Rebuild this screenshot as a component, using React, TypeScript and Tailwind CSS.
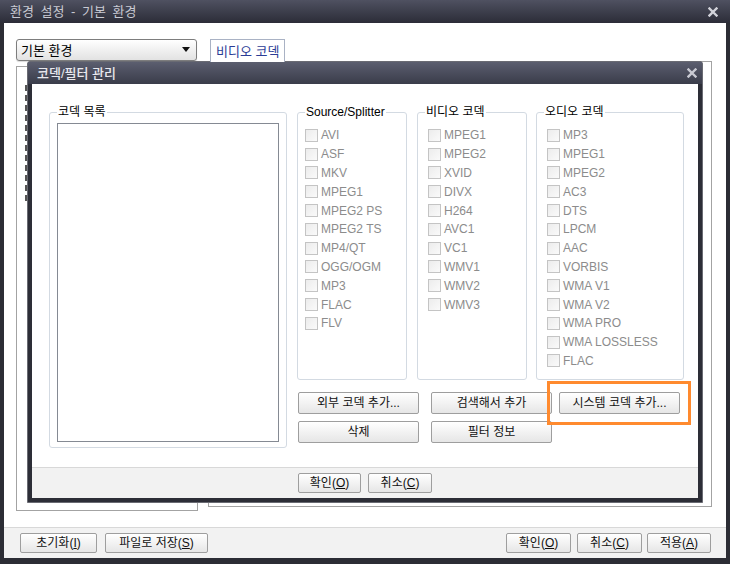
import React from "react";

const XIcon = ({ color = "#cfd0d8" }: { color?: string }) => (
  <svg width="10" height="10" viewBox="0 0 10 10">
    <path d="M1.5 1.5 L8.5 8.5 M8.5 1.5 L1.5 8.5" stroke={color} strokeWidth="2.4" strokeLinecap="square" fill="none" />
  </svg>
);

function Btn({ label, hot, className = "" }: { label: string; hot?: string; className?: string }) {
  return (
    <button
      className={`flex items-center justify-center border border-[#9e9e9e] rounded-[2px] bg-gradient-to-b from-[#ffffff] to-[#e6e6e6] text-[12px] text-[#111] leading-none ${className}`}
    >
      <span>
        {label}
        {hot && (
          <>
            (<span className="underline">{hot}</span>)
          </>
        )}
      </span>
    </button>
  );
}

function Check({ label }: { label: string }) {
  return (
    <div className="h-[18.8px] flex items-center">
      <span className="w-[13px] h-[13px] shrink-0 border border-[#c4c4c4] bg-gradient-to-br from-[#ececec] to-[#fafafa]" />
      <span className="ml-[3px] text-[12px] leading-none text-[#8c8c8c] whitespace-nowrap">{label}</span>
    </div>
  );
}

function Group({ title, className = "", children }: { title: string; className?: string; children?: React.ReactNode }) {
  return (
    <div className={`relative border border-[#d3dae2] rounded-[3px] ${className}`}>
      <span className="absolute left-[7px] -top-[8px] px-[1px] bg-white text-[12px] leading-[14px] text-black whitespace-nowrap">
        {title}
      </span>
      {children}
    </div>
  );
}

const source = ["AVI", "ASF", "MKV", "MPEG1", "MPEG2 PS", "MPEG2 TS", "MP4/QT", "OGG/OGM", "MP3", "FLAC", "FLV"];
const video = ["MPEG1", "MPEG2", "XVID", "DIVX", "H264", "AVC1", "VC1", "WMV1", "WMV2", "WMV3"];
const audio = ["MP3", "MPEG1", "MPEG2", "AC3", "DTS", "LPCM", "AAC", "VORBIS", "WMA V1", "WMA V2", "WMA PRO", "WMA LOSSLESS", "FLAC"];

export default function App() {
  return (
    <div className="w-[730px] h-[564px] flex flex-col bg-[#2c2d35] overflow-hidden font-['Liberation_Sans','Noto_Sans_CJK_KR',sans-serif] text-[12px] text-black">
      {/* outer title bar */}
      <div className="h-[23px] shrink-0 flex items-center justify-between pl-[10px] pr-[12px] bg-gradient-to-b from-[#4f5161] to-[#2c2d38]">
        <span className="text-[13px] text-[#c9cad3] [word-spacing:3px] leading-none">환경 설정 - 기본 환경</span>
        <XIcon color="#d2d3da" />
      </div>

      {/* client */}
      <div className="flex-1 mx-[4px] mb-[6px] bg-white flex flex-col">
        <div className="relative flex-1 flex gap-[10px] pl-[12px] pt-[16px]">
          {/* left column */}
          <div className="w-[182px] flex flex-col">
            <div className="w-[181px] h-[22px] flex items-center justify-between pl-[4px] pr-[6px] border border-[#7d7d7d] rounded-[3px] bg-gradient-to-b from-[#ffffff] to-[#e2e2e2] shadow-[0_1px_1px_rgba(0,0,0,0.15)]">
              <span className="text-[13px] leading-none">기본 환경</span>
              <svg width="8" height="6" viewBox="0 0 8 6">
                <polygon points="0,0 8,0 4,5" fill="#111" />
              </svg>
            </div>
            <div className="mt-[5px] h-[445px] border border-[#a3a3a3] pt-[18px] pl-[8px]">
              <div className="h-[116px] w-0 border-l-2 border-dashed border-[#555]" />
            </div>
          </div>

          {/* right column */}
          <div className="w-[504px] flex flex-col">
            <div className="relative z-10 ml-[2px] -mb-px w-[75px] h-[23px] flex items-center pl-[5px] border border-b-0 border-[#a9b2c4] bg-white">
              <span className="text-[13px] leading-none text-[#2b3c96]">비디오 코덱</span>
            </div>
            <div className="h-[446px] border border-[#a3a3a3]" />
          </div>

          {/* codec / filter dialog */}
          <div className="absolute left-[23px] top-[38px] w-[676px] h-[442px] flex flex-col border border-[#6a6b73] rounded-t-[3px] bg-[#2d2e37]">
            <div className="h-[22px] shrink-0 flex items-center justify-between pl-[9px] pr-[5px] bg-gradient-to-b from-[#5b5e6f] to-[#3a3c4a]">
              <span className="text-[13px] text-[#e8e8ee] leading-none font-medium">코덱/필터 관리</span>
              <XIcon color="#c9cad3" />
            </div>
            <div className="flex-1 mx-[4px] mb-[4px] bg-white flex flex-col">
              <div className="flex-1 flex pl-[17px] pt-[28px] gap-[10px]">
                <Group title="코덱 목록" className="w-[238px] h-[336px] pt-[10px] pl-[7px]">
                  <div className="w-[222px] h-[319px] border border-[#858a93] bg-white" />
                </Group>

                <div className="flex flex-col">
                  <div className="flex">
                    <Group title="Source/Splitter" className="w-[110px] h-[268px] pt-[13px] pl-[7px]">
                      {source.map((s) => (
                        <Check key={s} label={s} />
                      ))}
                    </Group>
                    <Group title="비디오 코덱" className="ml-[10px] w-[110px] h-[268px] pt-[13px] pl-[10px]">
                      {video.map((s) => (
                        <Check key={s} label={s} />
                      ))}
                    </Group>
                    <Group title="오디오 코덱" className="ml-[9px] w-[148px] h-[268px] pt-[13px] pl-[10px]">
                      {audio.map((s) => (
                        <Check key={s} label={s} />
                      ))}
                    </Group>
                  </div>

                  <div className="mt-[12px] flex">
                    <Btn label="외부 코덱 추가..." className="ml-[1px] w-[121px] h-[22px]" />
                    <Btn label="검색해서 추가" className="ml-[12px] w-[121px] h-[22px]" />
                    <div className="relative ml-[7px]">
                      <Btn label="시스템 코덱 추가..." className="w-[121px] h-[22px]" />
                      <span className="absolute -left-[12px] -right-[11px] -top-[11px] -bottom-[11px] border-[3px] border-[#ff8a2e] pointer-events-none" />
                    </div>
                  </div>
                  <div className="mt-[7px] flex">
                    <Btn label="삭제" className="ml-[1px] w-[121px] h-[22px]" />
                    <Btn label="필터 정보" className="ml-[12px] w-[121px] h-[22px]" />
                  </div>
                </div>
              </div>

              <div className="h-[31px] shrink-0 border-t border-[#d8d8d8] bg-[#f2f2f2] flex items-center justify-center gap-[7px]">
                <Btn label="확인" hot="O" className="w-[63px] h-[20px]" />
                <Btn label="취소" hot="C" className="w-[64px] h-[20px]" />
              </div>
            </div>
          </div>
        </div>

        {/* outer bottom bar */}
        <div className="h-[31px] shrink-0 border-t border-[#d8d8d8] bg-[#f2f2f2] flex items-center justify-between pl-[16px] pr-[15px]">
          <div className="flex gap-[8px]">
            <Btn label="초기화" hot="I" className="w-[77px] h-[20px]" />
            <Btn label="파일로 저장" hot="S" className="w-[103px] h-[20px]" />
          </div>
          <div className="flex">
            <Btn label="확인" hot="O" className="w-[65px] h-[20px]" />
            <Btn label="취소" hot="C" className="ml-[6px] w-[65px] h-[20px]" />
            <Btn label="적용" hot="A" className="ml-[5px] w-[64px] h-[20px]" />
          </div>
        </div>
      </div>
    </div>
  );
}
